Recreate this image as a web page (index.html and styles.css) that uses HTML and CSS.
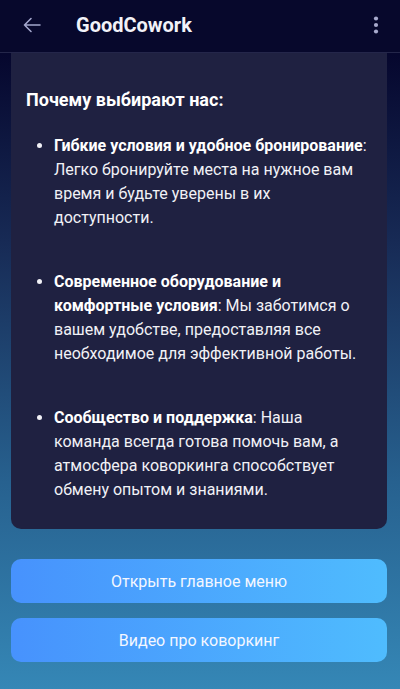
FILE: index.html
```html
<!DOCTYPE html>
<html lang="ru">
<head>
<meta charset="utf-8">
<title>GoodCowork</title>
<link rel="stylesheet" href="styles.css">
</head>
<body>
<header class="appbar">
  <button class="icon-btn back" aria-label="Назад">
    <svg width="24" height="24" viewBox="0 0 24 24"><path d="M20 12H4.5M11 5.5L4.5 12L11 18.5" fill="none" stroke="#a3a6cc" stroke-width="1.6" stroke-linecap="round" stroke-linejoin="round"/></svg>
  </button>
  <h1 class="title">GoodCowork</h1>
  <button class="icon-btn menu" aria-label="Меню">
    <svg width="8" height="24" viewBox="0 0 8 24"><circle cx="4" cy="5.5" r="2.1" fill="#a8aacd"/><circle cx="4" cy="12" r="2.1" fill="#a8aacd"/><circle cx="4" cy="18.5" r="2.1" fill="#a8aacd"/></svg>
  </button>
</header>
<main class="content">
  <section class="card">
    <h2 class="card-title">Почему выбирают нас:</h2>
    <ul class="features">
      <li><b>Гибкие условия и удобное бронирование</b>: Легко бронируйте места на нужное вам время и будьте уверены в их доступности.</li>
      <li><b>Современное оборудование и комфортные условия</b>: Мы заботимся о вашем удобстве, предоставляя все необходимое для эффективной работы.</li>
      <li><b>Сообщество и поддержка</b>: Наша команда всегда готова помочь вам, а атмосфера коворкинга способствует обмену опытом и знаниями.</li>
    </ul>
  </section>
  <div class="actions">
    <button class="action">Открыть главное меню</button>
    <button class="action">Видео про коворкинг</button>
  </div>
</main>
</body>
</html>
```
FILE: styles.css
```css
* { box-sizing: border-box; }
html, body { margin: 0; padding: 0; }
body {
  width: 400px;
  height: 689px;
  overflow: hidden;
  font-family: Roboto, "Noto Sans", Arial, sans-serif;
  color: #ffffff;
  background: linear-gradient(180deg, #05052c 0%, #06072e 8%, #172a55 35%, #27618f 70%, #3587b6 100%);
  display: flex;
  flex-direction: column;
}
.appbar {
  height: 53px;
  flex: 0 0 53px;
  background: #07082c;
  border-bottom: 1px solid #24264a;
  display: flex;
  align-items: center;
  padding: 0 12px 0 20px;
}
.icon-btn {
  background: none;
  border: 0;
  padding: 0;
  display: flex;
  align-items: center;
  justify-content: center;
  cursor: pointer;
}
.back { width: 24px; height: 24px; margin-top: -3px; }
.title {
  margin: 0 0 0 32px;
  font-size: 20px;
  font-weight: 700;
  color: #f2f2f8;
  flex: 1;
  margin-top: -3px;
}
.menu { width: 24px; height: 24px; margin-top: -3px; }
.content {
  flex: 1;
  padding: 0 13px 0 11px;
  display: flex;
  flex-direction: column;
}
.card {
  background: #1f2141;
  border-radius: 0 0 10px 10px;
  padding: 35px 16px 27px 15px;
}
.card-title {
  margin: 0 0 22px;
  font-size: 18px;
  line-height: 24px;
  font-weight: 700;
}
.features {
  margin: 0;
  padding: 0 0 0 28px;
  font-size: 16px;
  line-height: 24px;
  color: #f1f1f6;
}
.features li { margin: 0 0 40px; }
.features li:last-child { margin-bottom: 0; }
.features b { font-weight: 700; color: #ffffff; }
.actions {
  margin-top: 30px;
  display: flex;
  flex-direction: column;
  gap: 15px;
}
.action {
  height: 44px;
  border: 0;
  border-radius: 10px;
  background: linear-gradient(90deg, #4792fd 0%, #4fbcfe 100%);
  color: #f4f7ff;
  font-family: Roboto, "Noto Sans", Arial, sans-serif;
  font-size: 16px;
  font-weight: 400;
  cursor: pointer;
}
```
